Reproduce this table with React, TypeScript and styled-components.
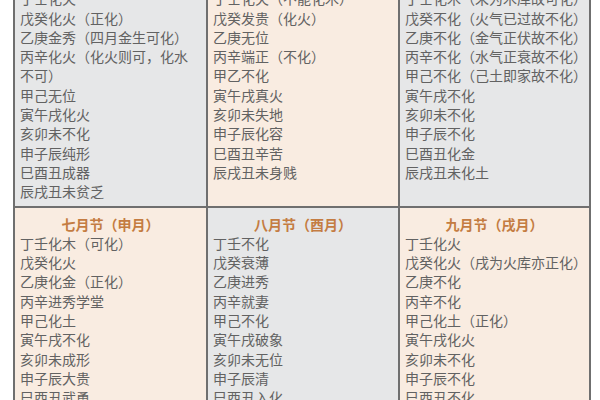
import React from "react";
import styled, { createGlobalStyle } from "styled-components";

const GlobalStyle = createGlobalStyle`
  html, body {
    margin: 0;
    padding: 0;
    background: #fff;
    overflow: hidden;
  }
`;

const Table = styled.div`
  display: grid;
  grid-template-columns: 191px 190px 189px;
  gap: 2px;
  padding: 2px;
  width: 578px;
  box-sizing: border-box;
  margin: -39px 0 0 13px;
  background: #6f6f6f;
  font-family: "Noto Sans CJK SC", "Noto Sans", sans-serif;
  font-size: 14px;
  line-height: 19.3px;
`;

const Cell = styled.div<{ $tone: "gray" | "peach" }>`
  background: ${(p) => (p.$tone === "gray" ? "#e6e7e8" : "#f9ece1")};
  padding: 7px 0 4px 5px;
  color: #626262;
`;

const Title = styled.div`
  text-align: center;
  font-weight: 700;
  color: #c47c42;
  padding-right: 5px;
`;

const Line = styled.div`
  white-space: nowrap;
`;

type Month = { title: string; lines: string[] };

const months: Month[] = [
  {
    title: "四月节（巳月）",
    lines: [
      "丁壬化火",
      "戊癸化火（正化）",
      "乙庚金秀（四月金生可化）",
      "丙辛化火（化火则可，化水",
      "不可）",
      "甲己无位",
      "寅午戌化火",
      "亥卯未不化",
      "申子辰纯形",
      "巳酉丑成器",
      "辰戌丑未贫乏",
    ],
  },
  {
    title: "五月节（午月）",
    lines: [
      "丁壬化火（不能化木）",
      "戊癸发贵（化火）",
      "乙庚无位",
      "丙辛端正（不化）",
      "甲乙不化",
      "寅午戌真火",
      "亥卯未失地",
      "申子辰化容",
      "巳酉丑辛苦",
      "辰戌丑未身贱",
    ],
  },
  {
    title: "六月节（未月）",
    lines: [
      "丁壬化木（未为木库故可化）",
      "戊癸不化（火气已过故不化）",
      "乙庚不化（金气正伏故不化）",
      "丙辛不化（水气正衰故不化）",
      "甲己不化（己土即家故不化）",
      "寅午戌不化",
      "亥卯未不化",
      "申子辰不化",
      "巳酉丑化金",
      "辰戌丑未化土",
    ],
  },
  {
    title: "七月节（申月）",
    lines: [
      "丁壬化木（可化）",
      "戊癸化火",
      "乙庚化金（正化）",
      "丙辛进秀学堂",
      "甲己化土",
      "寅午戌不化",
      "亥卯未成形",
      "申子辰大贵",
      "巳酉丑武勇",
    ],
  },
  {
    title: "八月节（酉月）",
    lines: [
      "丁壬不化",
      "戊癸衰薄",
      "乙庚进秀",
      "丙辛就妻",
      "甲己不化",
      "寅午戌破象",
      "亥卯未无位",
      "申子辰清",
      "巳酉丑入化",
    ],
  },
  {
    title: "九月节（戌月）",
    lines: [
      "丁壬化火",
      "戊癸化火（戌为火库亦正化）",
      "乙庚不化",
      "丙辛不化",
      "甲己化土（正化）",
      "寅午戌化火",
      "亥卯未不化",
      "申子辰不化",
      "巳酉丑不化",
    ],
  },
];

export default function App() {
  return (
    <>
      <GlobalStyle />
      <Table>
        {months.map((m, i) => (
          <Cell key={m.title} $tone={i % 2 === 0 ? "gray" : "peach"}>
            <Title>{m.title}</Title>
            {m.lines.map((l) => (
              <Line key={l}>{l}</Line>
            ))}
          </Cell>
        ))}
      </Table>
    </>
  );
}
